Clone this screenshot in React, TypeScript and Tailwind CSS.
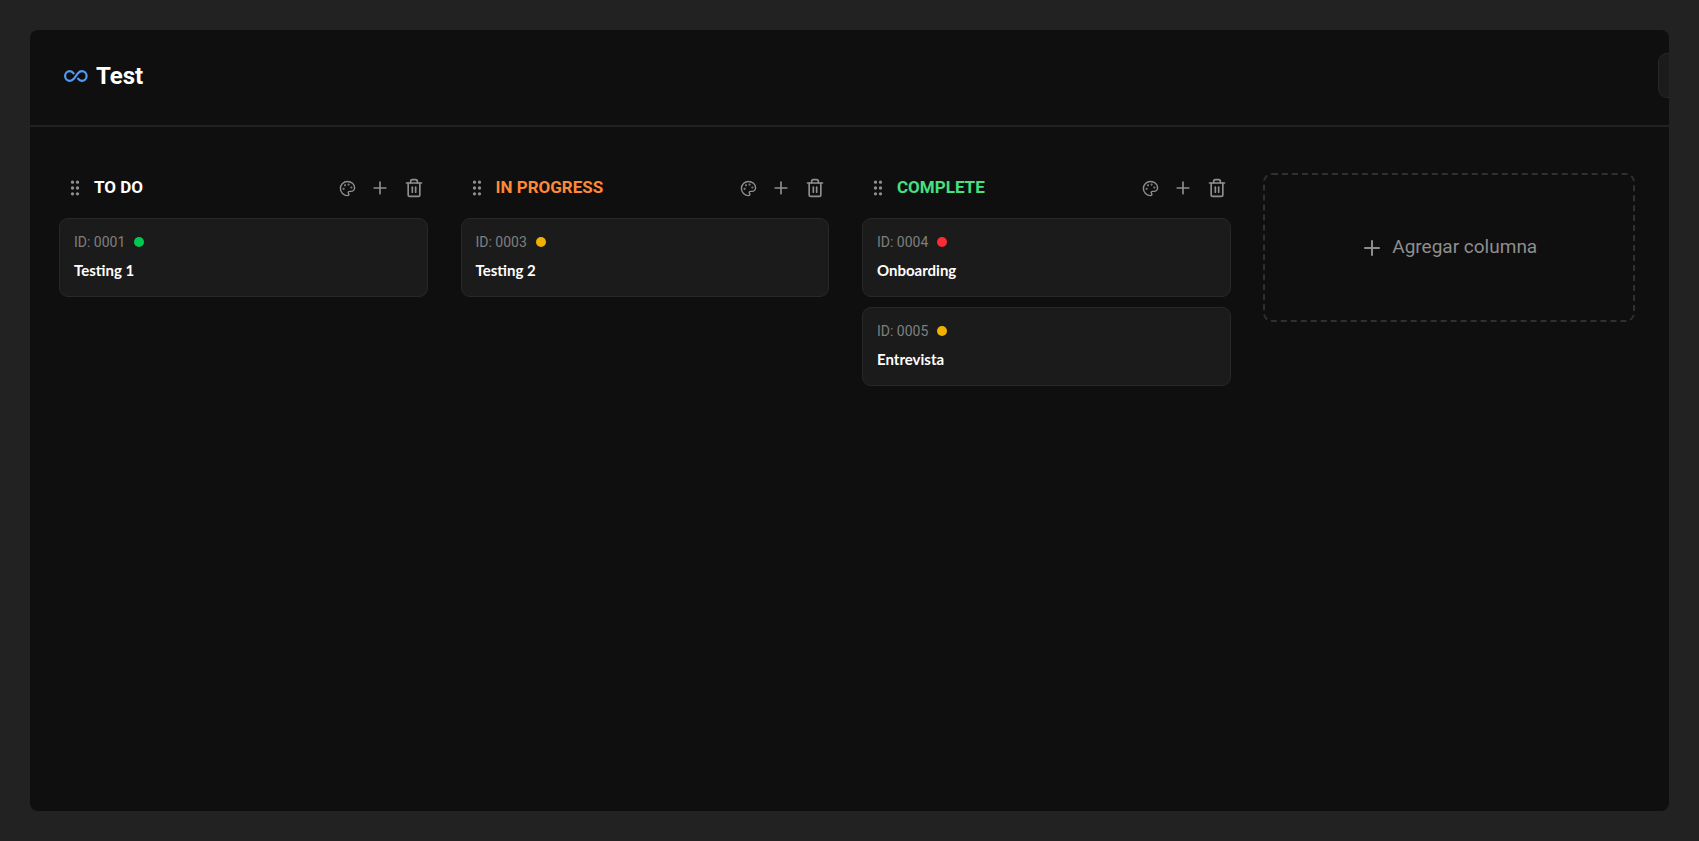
import { GripVertical, Palette, Plus, Trash2 } from "lucide-react"

const columns = [
    {
        title: "TO DO",
        color: "text-white",
        tasks: [{ id: "0001", name: "Testing 1", dot: "bg-[#00c951]" }],
    },
    {
        title: "IN PROGRESS",
        color: "text-[#ff8936]",
        tasks: [{ id: "0003", name: "Testing 2", dot: "bg-[#f0b100]" }],
    },
    {
        title: "COMPLETE",
        color: "text-[#46e080]",
        tasks: [
            { id: "0004", name: "Onboarding", dot: "bg-[#fb2c36]" },
            { id: "0005", name: "Entrevista", dot: "bg-[#f0b100]" },
        ],
    },
]

type ColumnProps = (typeof columns)[number]

const Logo = () => {
    return (
        <svg viewBox="0 0 24 12" className="h-3 w-6 text-[#509cf5]" fill="none" stroke="currentColor" strokeWidth="2.2" strokeLinecap="round" strokeLinejoin="round">
            <path d="M9.6 3.4C8.6 2 7.4 1.2 5.9 1.2A4.8 4.8 0 0 0 5.9 10.8C7.6 10.8 8.8 9.9 9.8 8.8L14 3.2C15 2 16.2 1.2 17.8 1.2A4.8 4.8 0 0 1 17.8 10.8C16.3 10.8 15.1 10 14.1 8.6" />
        </svg>
    )
}

const Column = ({ title, color, tasks }: ColumnProps) => {
    return (
        <section className="min-w-0 flex-1 pr-1 pl-px">
            {/* heading */}
            <div className="flex h-[30px] items-center text-[#8e8e8e]">
                <button aria-label="Mover columna" className="ml-1.5">
                    <GripVertical className="size-5" />
                </button>
                <h2 className={`ml-[9px] flex-1 text-[17px] font-bold ${color}`}>{title}</h2>

                {/* actions */}
                <div className="mr-1 flex items-center gap-3.5">
                    <button aria-label="Cambiar color"><Palette className="size-[17px]" /></button>
                    <button aria-label="Agregar tarea"><Plus className="size-5" /></button>
                    <button aria-label="Eliminar columna"><Trash2 className="size-5" /></button>
                </div>
            </div>

            {/* tasks */}
            <div className="mt-[15px] flex flex-col gap-2.5">
                {tasks.map((task) => (
                    <article key={task.id} className="rounded-[9px] border border-[#282828] bg-[#1b1b1b] px-3.5 pt-[11px] pb-3">
                        <div className="flex items-center gap-[9px]">
                            <p className="text-sm leading-6 text-[#7f7f7f]">ID: {task.id}</p>
                            <span className={`size-2.5 rounded-full ${task.dot}`}></span>
                        </div>
                        <h3 className="mt-0.5 font-['Lato',sans-serif] text-[15px] leading-7 font-bold text-white">{task.name}</h3>
                    </article>
                ))}
            </div>
        </section>
    )
}

const App = () => {
    return (
        <div className="flex min-h-screen bg-[#222222] p-[30px] font-['Roboto',sans-serif]">
            <main className="min-w-0 flex-1 overflow-hidden rounded-lg bg-[#0f0f0f]">
                {/* header */}
                <header className="flex h-[97px] items-center justify-between border-b-2 border-[#222222] pb-1 pl-[34px]">
                    <div className="flex items-center gap-2">
                        <Logo />
                        <h1 className="text-2xl font-bold text-white">Test</h1>
                    </div>

                    {/* menu */}
                    <button aria-label="Menú" className="-mr-[37px] h-[45px] w-12 rounded-[9px] border border-[#282828] bg-[#1b1b1b]"></button>
                </header>

                {/* board */}
                <div className="flex items-start gap-7 pt-[46px] pr-[34px] pl-7">
                    {columns.map((column) => (
                        <Column key={column.title} {...column} />
                    ))}

                    {/* new column */}
                    <button className="flex h-[149px] min-w-0 flex-1 items-center justify-center gap-2 rounded-[9px] border-2 border-dashed border-[#303030] text-[19px] text-[#8e8e8e]">
                        <Plus className="size-6" />
                        Agregar columna
                    </button>
                </div>
            </main>
        </div>
    )
}

export default App
